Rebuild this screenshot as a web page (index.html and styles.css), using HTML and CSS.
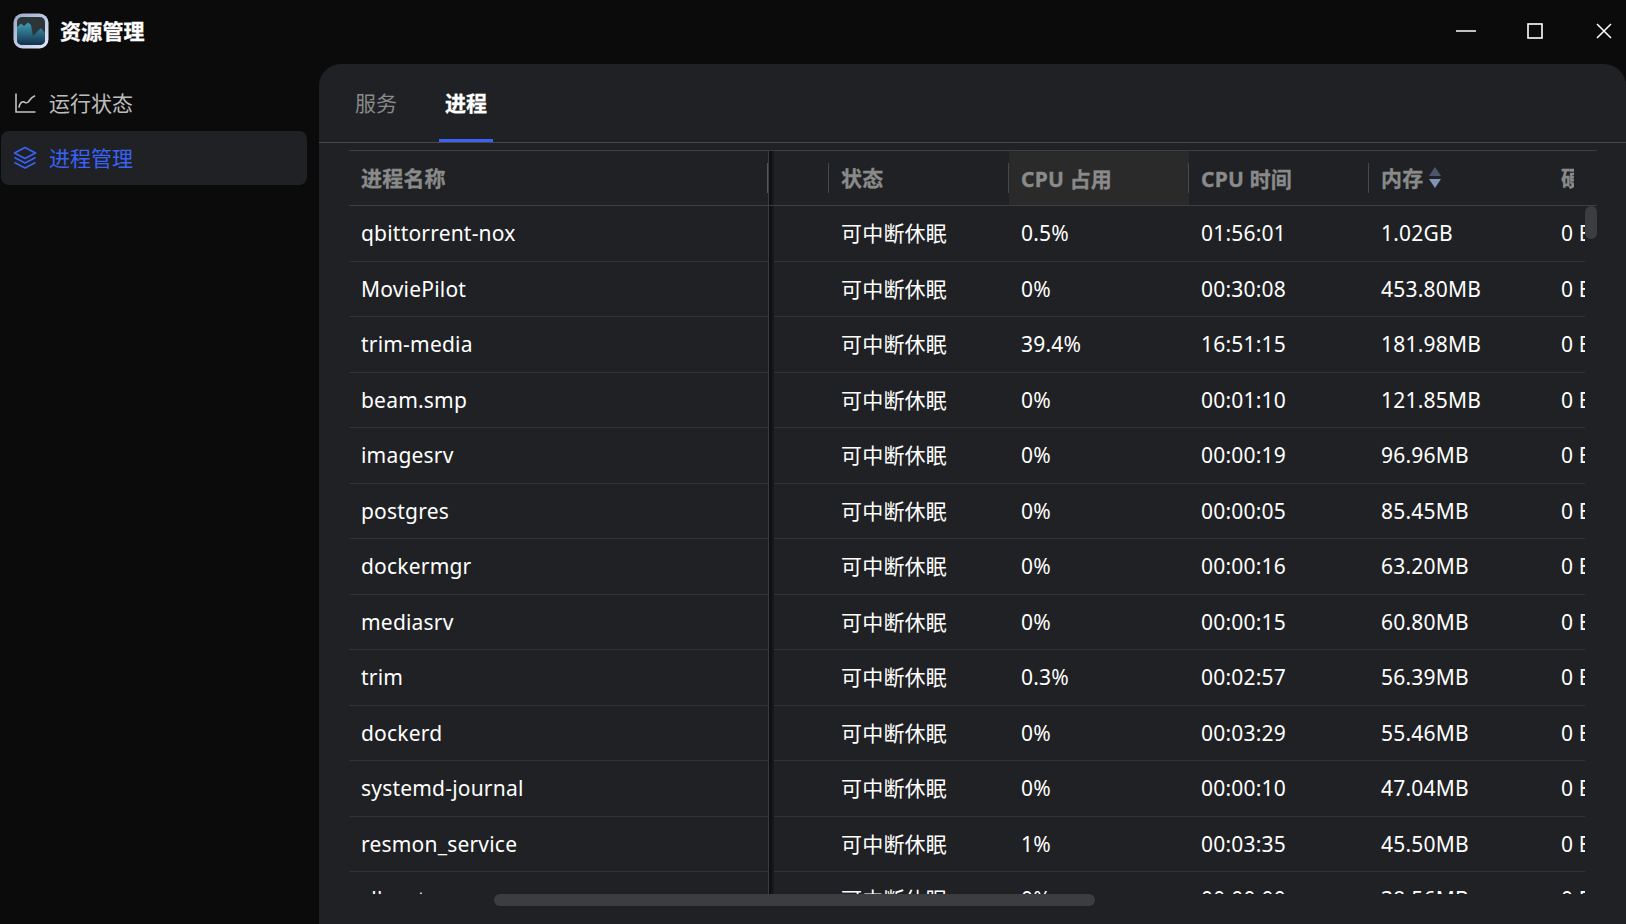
FILE: index.html
```html
<!DOCTYPE html>
<html lang="zh-CN">
<head>
<meta charset="utf-8">
<title>资源管理</title>
<link rel="stylesheet" href="styles.css">
</head>
<body>
<div class="app">
  <header class="titlebar">
    <div class="brand">
      <svg class="logo" width="36" height="36" viewBox="0 0 36 36">
        <defs>
          <linearGradient id="fr" x1="0" y1="0" x2="1" y2="1"><stop offset="0" stop-color="#9aa8c5"/><stop offset="1" stop-color="#e4eaff"/></linearGradient>
          <linearGradient id="ar" x1="0" y1="0" x2="0" y2="1"><stop offset="0" stop-color="#3f9fb6"/><stop offset="1" stop-color="#13304a"/></linearGradient>
        </defs>
        <rect x="0.5" y="0.5" width="35" height="35" rx="9" fill="url(#fr)"/>
        <rect x="4" y="4" width="28" height="28" rx="5" fill="#2c3538"/>
        <path d="M4 14l4-3.500 3 2.500 4-3.500 3 2.500 2 11 8-8 4 5V27a5 5 0 0 1-5 5H9a5 5 0 0 1-5-5z" fill="url(#ar)"/>
      </svg>
      <span class="app-name cjk">资源管理</span>
    </div>
    <div class="win-controls">
      <svg width="22" height="22" viewBox="0 0 22 22"><path d="M1 11h20" stroke="#fff" stroke-width="1.5"/></svg>
      <svg width="22" height="22" viewBox="0 0 22 22"><rect x="4" y="4" width="14" height="14" fill="none" stroke="#fff" stroke-width="1.6"/></svg>
      <svg width="22" height="22" viewBox="0 0 22 22"><path d="M4 4l14 14M18 4L4 18" stroke="#fff" stroke-width="1.5"/></svg>
    </div>
  </header>
  <div class="body">
    <nav class="sidebar">
      <a class="nav-item cjk">
        <svg width="24" height="24" viewBox="0 0 24 24" fill="none" stroke="#c4c4c4" stroke-width="1.6"><path d="M3 2.500v18.500h19.500"/><path d="M6 16c1-4 3-6 5-5s3 2 5-1 3-4 5.500-5" stroke-linecap="round"/></svg>
        <span>运行状态</span>
      </a>
      <a class="nav-item active cjk">
        <svg width="24" height="24" viewBox="0 0 24 24" fill="none" stroke="#3b62f6" stroke-width="1.7" stroke-linejoin="round"><path d="M12 1.500L22.500 7 12 12.500 1.500 7z"/><path d="M1.500 11.500L12 17l10.500-5.500"/><path d="M1.500 16.500L12 22l10.500-5.500"/></svg>
        <span>进程管理</span>
      </a>
    </nav>
    <main class="panel">
      <div class="tabs cjk">
        <div class="tab">服务</div>
        <div class="tab current">进程</div>
      </div>
      <div class="table-wrap">
        <div class="row head">
          <div class="cell name grip cjk">进程名称</div>
          <div class="cell sep cjk">状态</div>
          <div class="cell sep sorted">CPU 占用</div>
          <div class="cell sep">CPU 时间</div>
          <div class="cell sep cjk">内存<svg class="sort" width="12" height="21" viewBox="0 0 12 21"><path d="M6 0l6 9H0z" fill="#4d566b"/><path d="M6 21l6-9H0z" fill="#8093b8"/></svg></div>
          <div class="cell sep clipped cjk">硬盘读取</div>
        </div>
        <div class="rows">
          <div class="row"><div class="cell name">qbittorrent-nox</div><div class="cell cjk">可中断休眠</div><div class="cell">0.5%</div><div class="cell">01:56:01</div><div class="cell">1.02GB</div><div class="cell">0 B/s</div></div>
          <div class="row"><div class="cell name">MoviePilot</div><div class="cell cjk">可中断休眠</div><div class="cell">0%</div><div class="cell">00:30:08</div><div class="cell">453.80MB</div><div class="cell">0 B/s</div></div>
          <div class="row"><div class="cell name">trim-media</div><div class="cell cjk">可中断休眠</div><div class="cell">39.4%</div><div class="cell">16:51:15</div><div class="cell">181.98MB</div><div class="cell">0 B/s</div></div>
          <div class="row"><div class="cell name">beam.smp</div><div class="cell cjk">可中断休眠</div><div class="cell">0%</div><div class="cell">00:01:10</div><div class="cell">121.85MB</div><div class="cell">0 B/s</div></div>
          <div class="row"><div class="cell name">imagesrv</div><div class="cell cjk">可中断休眠</div><div class="cell">0%</div><div class="cell">00:00:19</div><div class="cell">96.96MB</div><div class="cell">0 B/s</div></div>
          <div class="row"><div class="cell name">postgres</div><div class="cell cjk">可中断休眠</div><div class="cell">0%</div><div class="cell">00:00:05</div><div class="cell">85.45MB</div><div class="cell">0 B/s</div></div>
          <div class="row"><div class="cell name">dockermgr</div><div class="cell cjk">可中断休眠</div><div class="cell">0%</div><div class="cell">00:00:16</div><div class="cell">63.20MB</div><div class="cell">0 B/s</div></div>
          <div class="row"><div class="cell name">mediasrv</div><div class="cell cjk">可中断休眠</div><div class="cell">0%</div><div class="cell">00:00:15</div><div class="cell">60.80MB</div><div class="cell">0 B/s</div></div>
          <div class="row"><div class="cell name">trim</div><div class="cell cjk">可中断休眠</div><div class="cell">0.3%</div><div class="cell">00:02:57</div><div class="cell">56.39MB</div><div class="cell">0 B/s</div></div>
          <div class="row"><div class="cell name">dockerd</div><div class="cell cjk">可中断休眠</div><div class="cell">0%</div><div class="cell">00:03:29</div><div class="cell">55.46MB</div><div class="cell">0 B/s</div></div>
          <div class="row"><div class="cell name">systemd-journal</div><div class="cell cjk">可中断休眠</div><div class="cell">0%</div><div class="cell">00:00:10</div><div class="cell">47.04MB</div><div class="cell">0 B/s</div></div>
          <div class="row"><div class="cell name">resmon_service</div><div class="cell cjk">可中断休眠</div><div class="cell">1%</div><div class="cell">00:03:35</div><div class="cell">45.50MB</div><div class="cell">0 B/s</div></div>
          <div class="row"><div class="cell name">cllocat</div><div class="cell cjk">可中断休眠</div><div class="cell">0%</div><div class="cell">00:00:00</div><div class="cell">38.56MB</div><div class="cell">0 B/s</div></div>
        </div>
        <div class="hbar"></div>
        <div class="vbar"></div>
      </div>
    </main>
  </div>
</div>
</body>
</html>
```
FILE: styles.css
```css
* { box-sizing: border-box; }
html, body { margin: 0; height: 100%; background: #0b0b0c; overflow: hidden; }
body { font-family: "Noto Sans", "Noto Sans CJK SC", sans-serif; color: #fff; }
.cjk { font-family: "Noto Sans CJK SC", sans-serif; }
.app { width: 1626px; height: 924px; display: flex; flex-direction: column; }
.titlebar { height: 64px; flex: none; display: flex; align-items: center; justify-content: space-between; padding: 0 11px 3px 13px; }
.brand { display: flex; align-items: center; gap: 11px; }
.logo { display: block; }
.app-name { font-size: 21px; font-weight: 700; letter-spacing: 0.2px; padding-bottom: 2px; -webkit-text-stroke: 0.3px #fff; }
.win-controls { display: flex; align-items: center; gap: 47px; }
.win-controls svg { display: block; }
.body { flex: 1; display: flex; min-height: 0; }
.sidebar { width: 319px; flex: none; padding: 12px 12px 0 1px; display: flex; flex-direction: column; gap: 1px; }
.nav-item { height: 54px; display: flex; align-items: center; gap: 12px; padding: 0 12px; border-radius: 8px; font-size: 21px; color: #bdbdbd; }
.nav-item span { padding-bottom: 3px; }
.nav-item.active { background: #1f2124; color: #3b62f6; }
.panel { flex: 1; min-width: 0; background: #1f2124; border-radius: 22px 22px 0 0; display: flex; flex-direction: column; }
.tabs { height: 79px; flex: none; display: flex; gap: 36px; padding-left: 30px; border-bottom: 1px solid #46484c; }
.tab { width: 54px; height: 78px; display: flex; align-items: center; justify-content: center; font-size: 21px; color: #8a8a8a; border-bottom: 3px solid transparent; }
.tab.current { color: #fff; font-weight: 700; border-bottom-color: #3b62f6; -webkit-text-stroke: 0.3px #fff; }
.table-wrap { position: relative; margin: 7px 0 0 30px; width: 1248px; }
.row { display: flex; height: 55.5px; border-bottom: 1px solid #303236; font-size: 21px; width: 1400px; letter-spacing: 0.2px; }
.row.head { width: 1248px; height: 56px; overflow: hidden; font-weight: 700; color: #8a8a8a; border-top: 1px solid #3c3e42; border-bottom-color: #3c3e42; -webkit-text-stroke: 0.3px #8a8a8a; }
.rows { width: 1236px; height: 688px; overflow: hidden; }
.cell { width: 180px; flex: none; display: flex; align-items: center; padding-left: 12px; white-space: nowrap; position: relative; }
.cell.cjk { padding-bottom: 2px; }
.cell.name { width: 480px; }
.cell.name::after { content: ""; position: absolute; left: 419px; top: 0; bottom: -1px; width: 6px; background: linear-gradient(to right, #3a3c40 0, #3a3c40 1px, #0e0e0f 1px, #101112 3px, #1a1b1d 6px); }
.grip::before { content: ""; position: absolute; left: 418px; top: 12px; bottom: 12px; width: 2px; background: #55575b; }
.sep::before { content: ""; position: absolute; left: -1px; top: 12px; bottom: 12px; width: 1px; background: #46484c; }
.sorted { background: #2a2a2b; }
.clipped { width: 25px; overflow: hidden; }
.clipped::before { display: none; }
.sort { margin-left: 6px; }
.vbar { position: absolute; right: 0; top: 56px; width: 12px; height: 33px; border-radius: 6px; background: #3c3d40; }
.hbar { margin-left: 145px; width: 601px; height: 12px; border-radius: 6px; background: #3c3d40; }
```
